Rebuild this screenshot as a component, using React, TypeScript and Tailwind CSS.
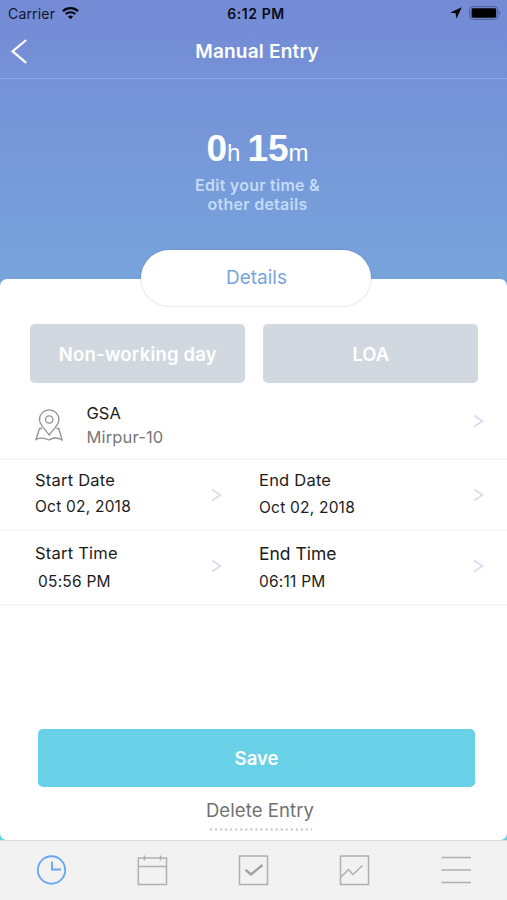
import { ReactNode } from 'react';

const Chevron = () => (
  <svg width="11" height="14" viewBox="0 0 11 14" fill="none" stroke="#dadcef" strokeWidth="1.9">
    <path d="M1.200 1.500 9.400 7 1.200 12.500" />
  </svg>
);

const StatusBar = () => (
  <div className="grid h-7 grid-cols-3 text-black">
    <div className="flex items-start gap-[7px] pl-[8px] pt-1">
      <span className="text-[14px] leading-5 tracking-[0.18px] text-[#10162b]">Carrier</span>
      <svg className="mt-[3px]" width="17" height="13" viewBox="0 0 17 13" fill="none" stroke="#05070f">
        <path d="M1 4.2C5.2.2 11.8.2 16 4.2" strokeWidth="2.2" />
        <path d="M3.7 7.1c2.7-2.5 6.9-2.5 9.6 0" strokeWidth="2.1" />
        <path d="M5.9 9.4c1.5-1.3 3.7-1.3 5.2 0L8.5 12.2Z" fill="#05070f" stroke="none" />
      </svg>
    </div>
    <div className="pl-[5px] pt-1 text-center text-[14px] font-semibold leading-5 tracking-[0.55px] text-[#080b18]">
      6:12 PM
    </div>
    <div className="flex items-start justify-end gap-[7px] pr-[6px] pt-[6px]">
      <svg className="mt-[1px]" width="12" height="12" viewBox="0 0 12 12" fill="#05070f">
        <path d="M11.8.2 6.4 11.8 5.6 6.3.1 5.6Z" />
      </svg>
      <svg width="32" height="14" viewBox="0 0 32 14">
        <rect x=".8" y=".6" width="28" height="12.8" rx="3" fill="none" stroke="#4c5c91" strokeWidth="1" />
        <rect x="2.6" y="2.3" width="24.6" height="9.4" rx="1.4" fill="#000" />
        <path d="M30.2 4.8c1.5.6 1.5 3.8 0 4.4Z" fill="#4c5c91" />
      </svg>
    </div>
  </div>
);

const NavBar = () => (
  <div className="grid h-[51px] grid-cols-[60px_1fr_60px] border-b border-[#8eaae4]">
    <button className="flex items-start pl-[11px] pt-[11px]" aria-label="Back">
      <svg width="17" height="25" viewBox="0 0 17 25" fill="none" stroke="#fff" strokeWidth="2.2">
        <path d="M15.2 1 1.6 12.3 15.2 23.8" />
      </svg>
    </button>
    <h1 className="pl-[7px] pt-3 text-center text-[19px] font-semibold leading-6 tracking-[0.2px] text-white">
      Manual Entry
    </h1>
  </div>
);

interface FieldProps {
  label: string;
  value: string;
  className?: string;
  labelClass?: string;
  valueClass?: string;
}

const Field = ({ label, value, className = '', labelClass = '', valueClass = '' }: FieldProps) => (
  <div className={`text-[#1c1c1c] ${className}`}>
    <div className={`leading-5 ${labelClass || 'text-[16.5px] tracking-[0.22px]'}`}>{label}</div>
    <div className={`text-[15.5px] leading-5 tracking-[0.22px] ${valueClass}`}>{value}</div>
  </div>
);

const TabButton = ({ label, children }: { label: string; children: ReactNode }) => (
  <button className="flex flex-1 justify-center" aria-label={label}>
    <svg width="32" height="32" viewBox="0 0 32 32" fill="none" stroke="#b0b0b0" strokeWidth="1.5">
      {children}
    </svg>
  </button>
);

export default function App() {
  return (
    <div className="flex h-[900px] w-[507px] flex-col overflow-hidden bg-linear-to-b from-[#748ad5] via-[#78a4dc] via-[31%] to-[#62d2e6] to-[93%] font-['Inter','Liberation_Sans',sans-serif]">
      <StatusBar />
      <NavBar />

      <div className="h-[200px] pl-[8px] pt-[50px] text-center">
        <div className="font-['Liberation_Sans',sans-serif] leading-10 text-white">
          <span className="text-[37px] font-bold">0</span>
          <span className="text-[24px]">h</span>
          <span className="ml-[7px] text-[37px] font-bold">15</span>
          <span className="text-[24px]">m</span>
        </div>
        <p className="text-[16px] font-semibold leading-[18.5px] tracking-[0.25px] text-[#c3daf8]">
          Edit your time &amp;
          <br />
          other details
        </p>
      </div>

      <div className="flex h-[561px] flex-col rounded-[7px] bg-white">
        <div className="-mt-[29px] ml-[141px] h-[56px] w-[230px] rounded-[28px] bg-white pl-px pt-[15px] text-center text-[19px] leading-[26px] text-[#78a5dc] shadow-[0_0_2px_rgba(60,50,80,0.3)]">
          Details
        </div>

        <div className="mt-[18px] flex gap-[18px] pl-[30.4px] text-[18.5px] font-semibold text-white">
          <button className="h-[59px] w-[215px] rounded-[5px] bg-[#d2d8df] pt-[2px] tracking-[0.2px]">Non-working day</button>
          <button className="h-[59px] w-[215px] rounded-[5px] bg-[#d2d8df] pt-[2px]">LOA</button>
        </div>

        <div className="flex h-[77px] border-b-2 border-[#f6f6f7] pl-[35px] pr-[23px]">
          <svg className="mt-[26px]" width="28" height="33" viewBox="0 0 28 33" fill="none" stroke="#929292" strokeWidth="1.3">
            <path d="M14.2 26C10.500 20.500 4.500 16.500 4.500 10.500a9.700 9.700 0 0 1 19.400 0C23.900 16.500 17.900 20.500 14.200 26Z" />
            <circle cx="14.2" cy="10.500" r="3.700" />
            <path d="M7 19.500H4.500L1 30.500C6 28 10 29.200 14 31 18 28.500 23 28.500 27.200 31L23.700 19.500H21.500" />
          </svg>
          <div className="ml-[23.5px] flex-1 pt-5">
            <div className="text-[16.5px] leading-5 text-[#1c1c1c]">GSA</div>
            <div className="mt-1 text-[16.5px] leading-5 tracking-[0.15px] text-[#777]">Mirpur-10</div>
          </div>
          <div className="pt-[31px]">
            <Chevron />
          </div>
        </div>

        <div className="flex h-[71px] border-b-2 border-[#f6f6f7] pl-[35px] pr-[23px] pt-[10px]">
          <Field label="Start Date" value="Oct 02, 2018" className="w-[176px]" valueClass="mt-[7px]" />
          <div className="mr-[37px] pt-[18px]">
            <Chevron />
          </div>
          <Field label="End Date" value="Oct 02, 2018" className="flex-1" valueClass="mt-[8px]" />
          <div className="pt-[18px]">
            <Chevron />
          </div>
        </div>

        <div className="flex h-[75px] border-b-2 border-[#f6f6f7] pl-[35px] pr-[23px] pt-3">
          <Field label="Start Time" value="05:56 PM" className="w-[176px]" valueClass="mt-[9px] pl-[3px]" />
          <div className="mr-[37px] pt-[16px]">
            <Chevron />
          </div>
          <Field label="End Time" value="06:11 PM" className="flex-1" labelClass="pt-px text-[17.5px]" valueClass="mt-[8px]" />
          <div className="pt-[16px]">
            <Chevron />
          </div>
        </div>

        <button className="ml-[38px] mt-[123px] h-[58px] w-[437px] rounded-[5px] bg-[#68d1e8] text-[18.5px] font-semibold leading-[58px] text-white">
          Save
        </button>
        <div className="mt-[11px] pl-[13px] text-center text-[18.5px] leading-6 tracking-[0.1px] text-[#717171]">Delete Entry</div>
        <svg className="ml-[209px] mt-[6px]" width="104" height="3">
          <path d="M1 1.5H103" stroke="#c2c2c2" strokeWidth="2" strokeDasharray="2 3.05" />
        </svg>
      </div>

      <nav className="flex flex-1 border-t border-[#dadada] bg-[#f2f2f2] pt-[13px]">
        <TabButton label="Time">
          <g stroke="#69a8f5" strokeWidth="1.9">
            <circle cx="16.500" cy="16" r="13.700" />
            <path d="M17 7.500V15.500H26" />
          </g>
        </TabButton>
        <TabButton label="Calendar">
          <path d="M2.300 4H30.500V30.500H2.300ZM2.300 12.500H30.500M8.500 1.500V6.500M24.500 1.500V6.500" />
        </TabButton>
        <TabButton label="Approvals">
          <path d="M1.500 2H29.500V30.500H1.500Z" />
          <path d="M7.500 15.800 13 20.500 24.500 11" stroke="#a0a0a0" strokeWidth="2.400" />
        </TabButton>
        <TabButton label="Reports">
          <path d="M1.500 2H29.500V30.500H1.500ZM2 23 9.500 15.500 14 20.500 23.500 11.500" />
        </TabButton>
        <TabButton label="Menu">
          <path d="M1.500 3.500H31M1.500 16H31M1.500 28.500H31" />
        </TabButton>
      </nav>
    </div>
  );
}
